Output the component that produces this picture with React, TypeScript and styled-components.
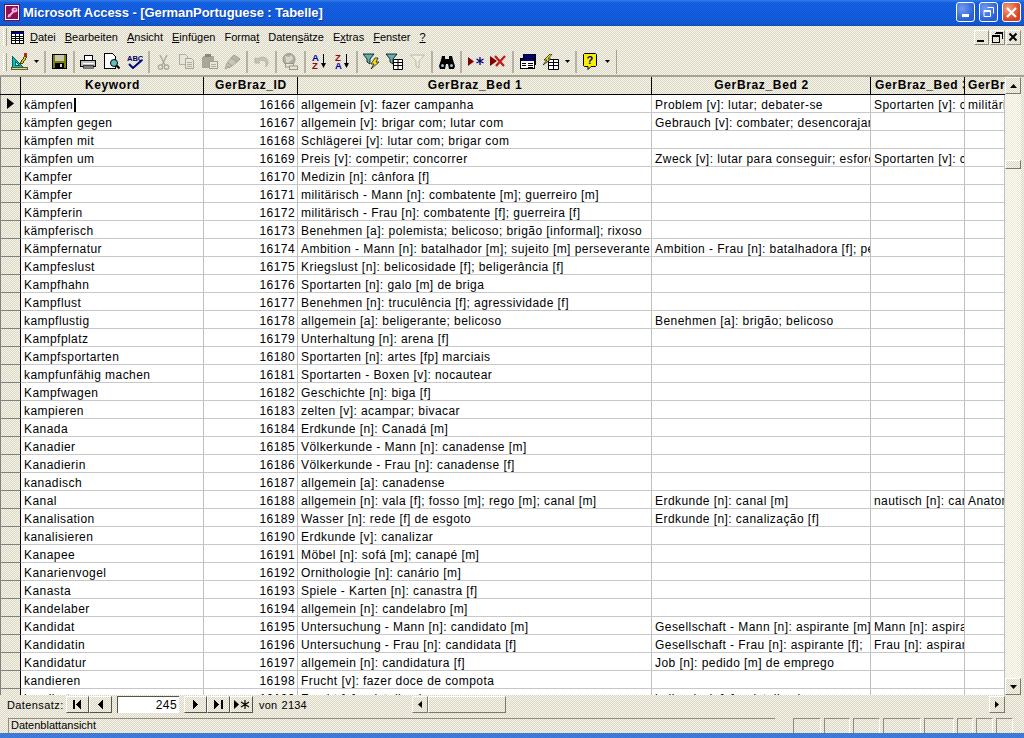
import React from "react";
import styled, {createGlobalStyle} from "styled-components";

const GlobalStyle = createGlobalStyle`
    html, body {
        margin: 0;
        padding: 0;
        background: #ece9d8;
    }
    body {
        font-family: "Liberation Sans", Arial, sans-serif;
        font-size: 12px;
        color: #000;
    }
`;

const dither = `repeating-conic-gradient(#d9d6c6 0 25%, #f7f5ea 0 50%) 0 0 / 2px 2px`;
const trackDither = `repeating-conic-gradient(#ece9d8 0 25%, #fdfcf4 0 50%) 0 0 / 2px 2px`;

const COLUMNS = "21px 183px 94px 354px 219px 94px 40px";

type Row = [string, number, string, string?, string?, string?];

const rows: Row[] = [
    ["kämpfen", 16166, "allgemein [v]: fazer campanha", "Problem [v]: lutar; debater-se", "Sportarten [v]: competir", "militärisch"],
    ["kämpfen gegen", 16167, "allgemein [v]: brigar com; lutar com", "Gebrauch [v]: combater; desencorajar"],
    ["kämpfen mit", 16168, "Schlägerei [v]: lutar com; brigar com"],
    ["kämpfen um", 16169, "Preis [v]: competir; concorrer", "Zweck [v]: lutar para conseguir; esforçar-se", "Sportarten [v]: competir"],
    ["Kampfer", 16170, "Medizin [n]: cânfora [f]"],
    ["Kämpfer", 16171, "militärisch - Mann [n]: combatente [m]; guerreiro [m]"],
    ["Kämpferin", 16172, "militärisch - Frau [n]: combatente [f]; guerreira [f]"],
    ["kämpferisch", 16173, "Benehmen [a]: polemista; belicoso; brigão [informal]; rixoso"],
    ["Kämpfernatur", 16174, "Ambition - Mann [n]: batalhador [m]; sujeito [m] perseverante", "Ambition - Frau [n]: batalhadora [f]; perseverante"],
    ["Kampfeslust", 16175, "Kriegslust [n]: belicosidade [f]; beligerância [f]"],
    ["Kampfhahn", 16176, "Sportarten [n]: galo [m] de briga"],
    ["Kampflust", 16177, "Benehmen [n]: truculência [f]; agressividade [f]"],
    ["kampflustig", 16178, "allgemein [a]: beligerante; belicoso", "Benehmen [a]: brigão; belicoso"],
    ["Kampfplatz", 16179, "Unterhaltung [n]: arena [f]"],
    ["Kampfsportarten", 16180, "Sportarten [n]: artes [fp] marciais"],
    ["kampfunfähig machen", 16181, "Sportarten - Boxen [v]: nocautear"],
    ["Kampfwagen", 16182, "Geschichte [n]: biga [f]"],
    ["kampieren", 16183, "zelten [v]: acampar; bivacar"],
    ["Kanada", 16184, "Erdkunde [n]: Canadá [m]"],
    ["Kanadier", 16185, "Völkerkunde - Mann [n]: canadense [m]"],
    ["Kanadierin", 16186, "Völkerkunde - Frau [n]: canadense [f]"],
    ["kanadisch", 16187, "allgemein [a]: canadense"],
    ["Kanal", 16188, "allgemein [n]: vala [f]; fosso [m]; rego [m]; canal [m]", "Erdkunde [n]: canal [m]", "nautisch [n]: canal", "Anatomie"],
    ["Kanalisation", 16189, "Wasser [n]: rede [f] de esgoto", "Erdkunde [n]: canalização [f]"],
    ["kanalisieren", 16190, "Erdkunde [v]: canalizar"],
    ["Kanapee", 16191, "Möbel [n]: sofá [m]; canapé [m]"],
    ["Kanarienvogel", 16192, "Ornithologie [n]: canário [m]"],
    ["Kanasta", 16193, "Spiele - Karten [n]: canastra [f]"],
    ["Kandelaber", 16194, "allgemein [n]: candelabro [m]"],
    ["Kandidat", 16195, "Untersuchung - Mann [n]: candidato [m]", "Gesellschaft - Mann [n]: aspirante [m]", "Mann [n]: aspirante"],
    ["Kandidatin", 16196, "Untersuchung - Frau [n]: candidata [f]", "Gesellschaft - Frau [n]: aspirante [f];", "Frau [n]: aspirante"],
    ["Kandidatur", 16197, "allgemein [n]: candidatura [f]", "Job [n]: pedido [m] de emprego"],
    ["kandieren", 16198, "Frucht [v]: fazer doce de compota"],
    ["kandiert", 16199, "Frucht [a]: cristalizado", "kulinarisch [a]: cristalizado"],
];

const Window = styled.div`
    width: 1024px;
    height: 738px;
    display: flex;
    flex-direction: column;
    overflow: hidden;
    background: ${dither};
`;

const TitleBar = styled.div`
    height: 26px;
    flex: none;
    display: flex;
    align-items: center;
    padding: 0 3px 2px 4px;
    box-sizing: border-box;
    background:
        repeating-conic-gradient(rgba(0, 0, 60, .1) 0 25%, rgba(255, 255, 255, .06) 0 50%) 0 0 / 2px 2px,
        linear-gradient(#2f7ff0 0, #0c5ee6 3px, #0a59e0 20px, #0c55cf 24px, #0a48b8 26px);
`;

const TitleText = styled.div`
    margin-left: 3px;
    flex: 1;
    color: #fff;
    font-family: "Liberation Sans", sans-serif;
    font-weight: bold;
    font-size: 13px;
    letter-spacing: -0.08px;
    text-shadow: 1px 1px #0b3fa8;
`;

const CaptionButton = styled.div<{$close?: boolean}>`
    width: 19px;
    height: 20px;
    margin-left: 4px;
    box-sizing: border-box;
    border: 1px solid #fff;
    border-radius: 3px;
    display: flex;
    align-items: center;
    justify-content: center;
    background: ${p => p.$close
        ? "radial-gradient(circle at 30% 30%, #f0a080, #d8431f 70%)"
        : "radial-gradient(circle at 30% 30%, #6f9cf0, #2a5fd8 70%)"};
`;

const MenuBar = styled.div`
    height: 22px;
    flex: none;
    display: flex;
    align-items: center;
    padding-left: 3px;
    font-size: 11px;
`;

const Grip = styled.div`
    width: 2px;
    height: 18px;
    border-left: 1px solid #fff;
    border-right: 1px solid #a5a28f;
    flex: none;
`;

const MenuIcon = styled.div`
    margin: 0 6px 0 4px;
    display: flex;
`;

const MenuItem = styled.span`
    margin-right: 9px;
`;

const MdiButtons = styled.div`
    margin-left: auto;
    margin-right: 3px;
    display: flex;
    gap: 1px;
`;

const MdiButton = styled.div`
    width: 15px;
    height: 15px;
    box-sizing: border-box;
    display: flex;
    align-items: center;
    justify-content: center;
    border-top: 1px solid #fff;
    border-left: 1px solid #fff;
    border-right: 1px solid #8f8c7c;
    border-bottom: 1px solid #8f8c7c;
`;

const ToolBar = styled.div`
    height: 29px;
    flex: none;
    display: flex;
    align-items: center;
    padding-left: 3px;
    box-sizing: border-box;
    border-bottom: 2px solid #a5a28f;
`;

const ToolButton = styled.div<{$narrow?: boolean}>`
    width: ${p => (p.$narrow ? 11 : 23)}px;
    height: 23px;
    flex: none;
    display: flex;
    align-items: center;
    justify-content: center;
`;

const ToolSep = styled.div`
    width: 2px;
    height: 22px;
    margin: 0 2px;
    flex: none;
    background: #b5b2a3;
`;

const FirstTool = styled.div`
    margin-left: 1px;
    display: flex;
`;

const ToolbarEnd = styled.div`
    width: 1px;
    height: 24px;
    margin-left: 3px;
    background: #a5a28f;
`;

const Sheet = styled.div`
    flex: 1;
    min-height: 0;
    display: flex;
    padding-right: 3px;
`;

const Grid = styled.div`
    flex: 1;
    min-width: 0;
    overflow: hidden;
    background: #fff;
`;

const HeaderRow = styled.div`
    display: grid;
    grid-template-columns: ${COLUMNS};
    height: 18px;
    background: ${dither};
    border-bottom: 1px solid #000;
    box-sizing: border-box;
`;

const HeaderCell = styled.div`
    box-sizing: border-box;
    border-right: 1px solid #000;
    padding: 0 3px 0 4px;
    text-align: center;
    font-weight: bold;
    letter-spacing: 0.65px;
    line-height: 17px;
    overflow: hidden;
    white-space: nowrap;

    &:first-child {
        border-left: 1px solid #808080;
    }

    &:last-child {
        border-right: none;
        text-align: left;
        padding-left: 3px;
    }
`;

const DataRow = styled.div`
    display: grid;
    grid-template-columns: ${COLUMNS};
    height: 18px;
`;

const Selector = styled.div`
    box-sizing: border-box;
    background: ${dither};
    border-left: 1px solid #808080;
    border-right: 1px solid #000;
    border-bottom: 1px solid #808080;
    display: flex;
    align-items: center;
    justify-content: center;
`;

const Cell = styled.div<{$right?: boolean}>`
    box-sizing: border-box;
    border-right: 1px solid #c0c0c0;
    border-bottom: 1px solid #c8c8c8;
    padding: 0 2px 0 3px;
    line-height: 21px;
    letter-spacing: 0.44px;
    white-space: nowrap;
    overflow: hidden;
    text-align: ${p => (p.$right ? "right" : "left")};
`;

const Caret = styled.span`
    display: inline-block;
    width: 2px;
    height: 14px;
    margin-left: 1px;
    vertical-align: -3px;
    background: #000;
`;

const VScroll = styled.div`
    width: 16px;
    flex: none;
    display: flex;
    flex-direction: column;
    background: ${trackDither};
`;

const ScrollButton = styled.div`
    width: 16px;
    height: 17px;
    flex: none;
    box-sizing: border-box;
    display: flex;
    align-items: center;
    justify-content: center;
    background: ${dither};
    border-top: 1px solid #fff;
    border-left: 1px solid #fff;
    border-right: 1px solid #7c7969;
    border-bottom: 1px solid #7c7969;
`;

const VThumb = styled.div`
    height: 9px;
    margin-top: 66px;
    margin-bottom: auto;
    box-sizing: border-box;
    background: ${dither};
    border-top: 1px solid #fff;
    border-left: 1px solid #fff;
    border-right: 1px solid #7c7969;
    border-bottom: 1px solid #7c7969;
`;

const NavBar = styled.div`
    height: 19px;
    flex: none;
    display: flex;
    align-items: center;
    padding-left: 7px;
    padding-right: 19px;
    font-size: 11px;
`;

const NavLabel = styled.span`
    width: 59px;
    flex: none;
    letter-spacing: 0.4px;
`;

const NavButton = styled.div`
    width: 23px;
    height: 17px;
    flex: none;
    box-sizing: border-box;
    display: flex;
    align-items: center;
    justify-content: center;
    border-top: 1px solid #fff;
    border-left: 1px solid #fff;
    border-right: 1px solid #55534a;
    border-bottom: 1px solid #55534a;
`;

const NavInput = styled.div`
    width: 62px;
    height: 17px;
    margin: 0 5px;
    flex: none;
    box-sizing: border-box;
    padding-right: 2px;
    line-height: 16px;
    text-align: right;
    font-size: 12px;
    letter-spacing: 0.4px;
    background: #fff;
    border-top: 1px solid #55534a;
    border-left: 1px solid #55534a;
`;

const NavCount = styled.span`
    width: 153px;
    margin-left: 6px;
    flex: none;
    letter-spacing: 0.2px;
    word-spacing: 1px;
`;

const HScroll = styled.div`
    flex: 1;
    display: flex;
    align-items: center;
`;

const HThumb = styled.div`
    width: 78px;
    height: 17px;
    margin-right: auto;
    box-sizing: border-box;
    border-top: 1px solid #fff;
    border-left: 1px solid #fff;
    border-right: 1px solid #7c7969;
    border-bottom: 1px solid #7c7969;
`;

const StatusBar = styled.div`
    height: 19px;
    flex: none;
    display: flex;
    align-items: flex-end;
    padding: 0 8px;
    box-sizing: border-box;
`;

const StatusMain = styled.div`
    width: 768px;
    margin-right: 18px;
    height: 15px;
    line-height: 13px;
    padding-left: 2px;
    box-sizing: border-box;
    border-top: 1px solid #8f8c7c;
    border-left: 1px solid #8f8c7c;
    font-size: 11px;
`;

const StatusPanel = styled.div<{$w: number}>`
    width: ${p => p.$w}px;
    height: 15px;
    margin-right: 3px;
    flex: none;
    box-sizing: border-box;
    border-top: 1px solid #8f8c7c;
    border-left: 1px solid #8f8c7c;
    border-right: 1px solid #fff;
`;

const BottomStrip = styled.div`
    height: 5px;
    flex: none;
    background:
        repeating-conic-gradient(rgba(0, 0, 80, .08) 0 25%, rgba(255, 255, 255, .08) 0 50%) 0 0 / 2px 2px,
        #3a78dc;
`;

const Svg = ({children, w = 16, h = 16}: {children: React.ReactNode; w?: number; h?: number}) => (
    <svg width={w} height={h} viewBox={`0 0 ${w} ${h}`} shapeRendering="crispEdges">{children}</svg>
);

const AccessLogo = () => (
    <svg width="16" height="17" viewBox="0 0 16 17">
        <rect x="0.5" y="0.5" width="15" height="16" fill="#fff" stroke="#7a0a4a" />
        <rect x="2" y="2" width="12" height="13" fill="#8c1058" />
        <path d="M4 13L10 7" stroke="#f4b0d0" strokeWidth="2" />
        <path d="M4.500 10.500l2 2" stroke="#f4b0d0" strokeWidth="1.500" />
        <ellipse cx="10.500" cy="6" rx="3" ry="2.500" fill="#f4b0d0" />
        <circle cx="11" cy="5.500" r="0.800" fill="#8c1058" />
    </svg>
);

const TableIcon = () => (
    <Svg w={13} h={13}>
        <rect x="0.5" y="0.5" width="12" height="12" fill="#fff" stroke="#000" />
        <rect x="1" y="1" width="11" height="2" fill="#000080" />
        <path d="M1 5.500h11M1 7.500h11M1 9.500h11M4.500 3v9M8.500 3v9" stroke="#000" fill="none" />
    </Svg>
);

const DesignIcon = () => (
    <Svg w={17} h={17}>
        <path d="M1 14V3l11 11z" fill="#00c0c0" stroke="#006060" />
        <path d="M4 12V8l4 4z" fill="#e8e6d8" stroke="#006060" />
        <rect x="0" y="14" width="16" height="2" fill="#e8d860" stroke="#000" strokeWidth="0.6" />
        <path d="M9 10l5-7 2 1-5 7z" fill="#e8d000" stroke="#000" strokeWidth="0.7" />
        <rect x="13" y="0" width="3" height="3" fill="#c02020" />
    </Svg>
);

const DownArrow = () => (
    <svg width="5" height="3" viewBox="0 0 5 3"><path d="M0 0h5L2.500 3z" fill="#000" /></svg>
);

const SaveIcon = () => (
    <Svg w={15} h={15}>
        <rect x="0.5" y="0.5" width="14" height="14" fill="#808000" stroke="#000" />
        <rect x="3" y="1" width="9" height="6" fill="#c8c8b0" />
        <rect x="3" y="9" width="9" height="5" fill="#000" />
        <rect x="8" y="10" width="2" height="3" fill="#d0d0d0" />
    </Svg>
);

const PrintIcon = () => (
    <Svg w={17} h={15}>
        <path d="M5 1h8l-1 5H4z" fill="#fff" stroke="#000" />
        <rect x="0.5" y="6.5" width="15" height="6" rx="1" fill="#c0c0c0" stroke="#000" />
        <rect x="3" y="9" width="11" height="1" fill="#fff" />
        <rect x="3" y="11" width="10" height="3" fill="#808080" stroke="#000" strokeWidth="0.5" />
    </Svg>
);

const PreviewIcon = () => (
    <Svg w={17} h={17}>
        <path d="M1.500.500h8l3 3v12h-11z" fill="#fff" stroke="#000" />
        <circle cx="11" cy="10" r="3.500" fill="#60c0c0" stroke="#000" shapeRendering="auto" />
        <path d="M13.500 12.500l3 3" stroke="#000" strokeWidth="2" shapeRendering="auto" />
    </Svg>
);

const SpellIcon = () => (
    <svg width="16" height="15" viewBox="0 0 16 15">
        <text x="0" y="7" fontFamily="Liberation Sans" fontWeight="bold" fontSize="7.500" fill="#000060">ABC</text>
        <path d="M2 10l4 4 9-8" stroke="#000080" strokeWidth="2" fill="none" />
    </svg>
);

const CutIcon = () => (
    <svg width="13" height="16" viewBox="0 0 13 16">
        <path d="M3 1l5 10M10 1L5 11" stroke="#a8a898" strokeWidth="1.400" fill="none" />
        <circle cx="3.500" cy="13" r="2.200" fill="none" stroke="#a8a898" strokeWidth="1.300" />
        <circle cx="9.500" cy="13" r="2.200" fill="none" stroke="#a8a898" strokeWidth="1.300" />
    </svg>
);

const CopyIcon = () => (
    <Svg w={15} h={15}>
        <path d="M.500.500h6l2 2v8h-8z" fill="#e8e6d8" stroke="#b0ae9e" />
        <path d="M6.500 4.500h6l2 2v8h-8z" fill="#e8e6d8" stroke="#a8a898" />
        <path d="M8 8h5M8 10h5M8 12h5" stroke="#b0ae9e" />
    </Svg>
);

const PasteIcon = () => (
    <Svg w={16} h={15}>
        <rect x="0" y="2" width="12" height="12" rx="2" fill="#a8a898" />
        <rect x="3" y="0" width="6" height="3" fill="#888878" />
        <path d="M7.500 7.500h8v7h-8z" fill="#e8e6d8" stroke="#a0a090" />
        <path d="M9 10h5M9 12h5" stroke="#b0ae9e" />
    </Svg>
);

const BrushIcon = () => (
    <svg width="17" height="16" viewBox="0 0 17 16">
        <path d="M10 1l6 4-3 3-6-4z" fill="#b8b6a6" stroke="#a0a090" />
        <path d="M7 4l6 4-5 4-7 3 2-6z" fill="#c8c6b6" stroke="#a8a898" />
        <path d="M4 9l4 3M3 12l3 2" stroke="#98968a" />
    </svg>
);

const UndoIcon = () => (
    <svg width="15" height="13" viewBox="0 0 15 13">
        <path d="M1 3v5h5L4.500 6.500C7 4.500 11 5 12 8.500c.3 1.200 0 2.500-.8 3.500 2.500-1 3.400-4 2.500-6.500C12.500 2 7.500 1 3.800 3.800L1 3z" fill="#c6c4b4" stroke="#a8a898" strokeWidth="0.700" />
    </svg>
);

const LinksIcon = () => (
    <svg width="17" height="17" viewBox="0 0 17 17">
        <circle cx="7" cy="6.500" r="6" fill="#b0ae9e" stroke="#98968a" />
        <path d="M3 3l4 1 3-2 1 4-4 3-1 3-2-4z" fill="#d8d6c8" />
        <rect x="3.500" y="10.500" width="8" height="3.500" fill="#e8e6d8" stroke="#98968a" />
        <rect x="7.500" y="13" width="8" height="3.500" fill="#e8e6d8" stroke="#98968a" />
    </svg>
);

const SortIcon = ({down}: {down?: boolean}) => (
    <svg width="15" height="17" viewBox="0 0 15 17">
        <text x="0" y="7.500" fontFamily="Liberation Sans" fontWeight="bold" fontSize="9.500" fill={down ? "#a00000" : "#0000a0"}>{down ? "Z" : "A"}</text>
        <text x="0" y="16" fontFamily="Liberation Sans" fontWeight="bold" fontSize="9.500" fill={down ? "#0000a0" : "#a00000"}>{down ? "A" : "Z"}</text>
        <path d="M11.500 1v10" stroke="#000" />
        <path d="M9 10h5l-2.500 5z" fill="#000" />
    </svg>
);

const FilterIcon = () => (
    <svg width="17" height="17" viewBox="0 0 17 17">
        <path d="M0 1h11L7 6v5L4 9V6z" fill="#60b0b0" stroke="#000" strokeWidth="0.800" />
        <path d="M12 5L8 11h3l-3 5 8-7h-3l2-4z" fill="#f0e020" stroke="#000" strokeWidth="0.700" />
    </svg>
);

const FilterFormIcon = () => (
    <svg width="17" height="17" viewBox="0 0 17 17">
        <path d="M0 1h11L7 6v5L4 9V6z" fill="#60b0b0" stroke="#000" strokeWidth="0.800" />
        <path d="M7.500 6.500h9v10h-9z" fill="#fff" stroke="#000" />
        <path d="M8 9.500h8M8 12.500h8M12 7v9" stroke="#000" />
    </svg>
);

const FilterOffIcon = () => (
    <svg width="15" height="15" viewBox="0 0 15 15">
        <path d="M.500 1h14L9 7v7l-3-2V7z" fill="#f0eee0" stroke="#b8b6a6" />
    </svg>
);

const FindIcon = () => (
    <svg width="16" height="14" viewBox="0 0 16 14">
        <path d="M3 1h3v3h4V1h3l1 4 2 6-1 3H10l-1-5H7l-1 5H1l-1-3 2-6z" fill="#000" />
        <circle cx="3.500" cy="10.500" r="1.500" fill="#a0c0e0" />
        <circle cx="12.500" cy="10.500" r="1.500" fill="#a0c0e0" />
    </svg>
);

const NewRecordIcon = () => (
    <svg width="16" height="11" viewBox="0 0 16 11">
        <path d="M0 1l6 4.500L0 10z" fill="#800000" />
        <path d="M12 1v8M8.500 3l7 4M15.500 3l-7 4" stroke="#000080" strokeWidth="1.300" />
    </svg>
);

const DeleteRecordIcon = () => (
    <svg width="17" height="13" viewBox="0 0 17 13">
        <path d="M0 1l7 5-7 5z" fill="#800000" />
        <path d="M5 1l9 10M15 1L6 11" stroke="#c01818" strokeWidth="2.200" />
    </svg>
);

const DbWindowIcon = () => (
    <Svg w={16} h={15}>
        <rect x="3.500" y="0.500" width="12" height="10" fill="#000080" stroke="#000" />
        <rect x="0.500" y="4.500" width="14" height="10" fill="#fff" stroke="#000" />
        <rect x="1" y="5" width="13" height="2" fill="#000080" />
        <path d="M2 9h4M2 11h4M8 9h5M8 11h5M8 13h5" stroke="#000" />
    </Svg>
);

const NewObjectIcon = () => (
    <svg width="16" height="16" viewBox="0 0 16 16">
        <path d="M5.500 5.500h10v10h-10z" fill="#fff" stroke="#000" />
        <path d="M6 8.500h9M6 11.500h9M10.500 6v9" stroke="#000" />
        <path d="M7 0L1 6h3L0 11l8-6H5l4-5z" fill="#f0e020" stroke="#000" strokeWidth="0.700" />
    </svg>
);

const HelpIcon = () => (
    <svg width="15" height="17" viewBox="0 0 15 17">
        <path d="M1.500.500h11l1 1v11l-1 1H8l-3 3v-3H1.500l-1-1v-11z" fill="#f8f000" stroke="#000" />
        <text x="3.500" y="11" fontFamily="Liberation Sans" fontWeight="bold" fontSize="11" fill="#000080">?</text>
    </svg>
);

const Tri = ({dir}: {dir: "up" | "down" | "left" | "right"}) => {
    const d = {
        up: "M0 4L3.500 0 7 4z",
        down: "M0 0h7L3.500 4z",
        left: "M4 0v7L0 3.500z",
        right: "M0 0v7l4-3.500z",
    }[dir];
    const vertical = dir === "up" || dir === "down";
    return (
        <svg width={vertical ? 7 : 4} height={vertical ? 4 : 7}>
            <path d={d} fill="#000" />
        </svg>
    );
};

const RowArrow = () => (
    <svg width="7" height="11" viewBox="0 0 7 11"><path d="M0 0v11l7-5.500z" fill="#000" /></svg>
);

const NavFirst = () => <Svg w={9} h={9}><rect x="0" y="0" width="2" height="9" /><path d="M8 0v9L3 4.500z" /></Svg>;
const NavPrev = () => <Svg w={5} h={9}><path d="M5 0v9L0 4.500z" /></Svg>;
const NavNext = () => <Svg w={5} h={9}><path d="M0 0v9l5-4.500z" /></Svg>;
const NavLast = () => <Svg w={9} h={9}><path d="M0 0v9l5-4.500z" /><rect x="7" y="0" width="2" height="9" /></Svg>;
const NavNew = () => (
    <svg width="15" height="9" viewBox="0 0 15 9">
        <path d="M0 0v9l5-4.500z" />
        <path d="M11 0v9M7 2l8 5M15 2L7 7" stroke="#000" strokeWidth="1.200" />
    </svg>
);

const CaptionGlyph = ({kind}: {kind: "min" | "restore" | "close"}) => (
    <svg width="13" height="13" viewBox="0 0 13 13">
        {kind === "min" && <rect x="3" y="8" width="7" height="3" fill="#fff" />}
        {kind === "restore" && <path d="M5.500 1.500h6v6M2 4.500h6.500v6H2zM2 5.500h6.500" stroke="#fff" fill="none" />}
        {kind === "close" && <path d="M2 2l9 9M11 2l-9 9" stroke="#fff" strokeWidth="2.200" />}
    </svg>
);

const MdiGlyph = ({kind}: {kind: "min" | "restore" | "close"}) => (
    <svg width="11" height="11" viewBox="0 0 11 11" shapeRendering="crispEdges">
        {kind === "min" && <rect x="1" y="8" width="7" height="2" fill="#000" />}
        {kind === "restore" && <path d="M3.500.500h7v6M3 1.500h7M.500 3.500h7v7h-7zM1 4.500h6" stroke="#000" fill="none" />}
        {kind === "close" && <path d="M1.500 1.500l7 7M8.500 1.500l-7 7" stroke="#000" strokeWidth="2" shapeRendering="auto" />}
    </svg>
);

const statusPanels = [28, 26, 27, 38, 30, 16, 17, 17];

const App = () => {
    return (
        <Window>
            <GlobalStyle />
            <TitleBar>
                <AccessLogo />
                <TitleText>Microsoft Access - [GermanPortuguese : Tabelle]</TitleText>
                <CaptionButton><CaptionGlyph kind="min" /></CaptionButton>
                <CaptionButton><CaptionGlyph kind="restore" /></CaptionButton>
                <CaptionButton $close><CaptionGlyph kind="close" /></CaptionButton>
            </TitleBar>

            <MenuBar>
                <Grip />
                <MenuIcon><TableIcon /></MenuIcon>
                <MenuItem><u>D</u>atei</MenuItem>
                <MenuItem><u>B</u>earbeiten</MenuItem>
                <MenuItem><u>A</u>nsicht</MenuItem>
                <MenuItem><u>E</u>infügen</MenuItem>
                <MenuItem>Forma<u>t</u></MenuItem>
                <MenuItem>Daten<u>s</u>ätze</MenuItem>
                <MenuItem>E<u>x</u>tras</MenuItem>
                <MenuItem><u>F</u>enster</MenuItem>
                <MenuItem><u>?</u></MenuItem>
                <MdiButtons>
                    <MdiButton><MdiGlyph kind="min" /></MdiButton>
                    <MdiButton><MdiGlyph kind="restore" /></MdiButton>
                    <MdiButton><MdiGlyph kind="close" /></MdiButton>
                </MdiButtons>
            </MenuBar>

            <ToolBar>
                <Grip />
                <FirstTool>
                    <ToolButton><DesignIcon /></ToolButton>
                    <ToolButton $narrow><DownArrow /></ToolButton>
                </FirstTool>
                <ToolSep />
                <ToolButton><SaveIcon /></ToolButton>
                <ToolSep />
                <ToolButton><PrintIcon /></ToolButton>
                <ToolButton><PreviewIcon /></ToolButton>
                <ToolButton><SpellIcon /></ToolButton>
                <ToolSep />
                <ToolButton><CutIcon /></ToolButton>
                <ToolButton><CopyIcon /></ToolButton>
                <ToolButton><PasteIcon /></ToolButton>
                <ToolButton><BrushIcon /></ToolButton>
                <ToolSep />
                <ToolButton><UndoIcon /></ToolButton>
                <ToolSep />
                <ToolButton><LinksIcon /></ToolButton>
                <ToolSep />
                <ToolButton><SortIcon /></ToolButton>
                <ToolButton><SortIcon down /></ToolButton>
                <ToolSep />
                <ToolButton><FilterIcon /></ToolButton>
                <ToolButton><FilterFormIcon /></ToolButton>
                <ToolButton><FilterOffIcon /></ToolButton>
                <ToolSep />
                <ToolButton><FindIcon /></ToolButton>
                <ToolSep />
                <ToolButton><NewRecordIcon /></ToolButton>
                <ToolButton><DeleteRecordIcon /></ToolButton>
                <ToolSep />
                <ToolButton><DbWindowIcon /></ToolButton>
                <ToolButton><NewObjectIcon /></ToolButton>
                <ToolButton $narrow><DownArrow /></ToolButton>
                <ToolSep />
                <ToolButton><HelpIcon /></ToolButton>
                <ToolButton $narrow><DownArrow /></ToolButton>
                <ToolbarEnd />
            </ToolBar>

            <Sheet>
                <Grid>
                    <HeaderRow>
                        <HeaderCell />
                        <HeaderCell>Keyword</HeaderCell>
                        <HeaderCell>GerBraz_ID</HeaderCell>
                        <HeaderCell>GerBraz_Bed 1</HeaderCell>
                        <HeaderCell>GerBraz_Bed 2</HeaderCell>
                        <HeaderCell>GerBraz_Bed 3</HeaderCell>
                        <HeaderCell>GerBraz_Bed 4</HeaderCell>
                    </HeaderRow>
                    {rows.map((row, i) => (
                        <DataRow key={row[1]}>
                            <Selector>{i === 0 && <RowArrow />}</Selector>
                            <Cell>{row[0]}{i === 0 && <Caret />}</Cell>
                            <Cell $right>{row[1]}</Cell>
                            <Cell>{row[2]}</Cell>
                            <Cell>{row[3]}</Cell>
                            <Cell>{row[4]}</Cell>
                            <Cell>{row[5]}</Cell>
                        </DataRow>
                    ))}
                </Grid>
                <VScroll>
                    <ScrollButton><Tri dir="up" /></ScrollButton>
                    <VThumb />
                    <ScrollButton><Tri dir="down" /></ScrollButton>
                </VScroll>
            </Sheet>

            <NavBar>
                <NavLabel>Datensatz:</NavLabel>
                <NavButton><NavFirst /></NavButton>
                <NavButton><NavPrev /></NavButton>
                <NavInput>245</NavInput>
                <NavButton><NavNext /></NavButton>
                <NavButton><NavLast /></NavButton>
                <NavButton><NavNew /></NavButton>
                <NavCount>von 2134</NavCount>
                <HScroll>
                    <ScrollButton><Tri dir="left" /></ScrollButton>
                    <HThumb />
                    <ScrollButton><Tri dir="right" /></ScrollButton>
                </HScroll>
            </NavBar>

            <StatusBar>
                <StatusMain>Datenblattansicht</StatusMain>
                {statusPanels.map((w, i) => <StatusPanel key={i} $w={w} />)}
            </StatusBar>
            <BottomStrip />
        </Window>
    );
};

export default App;
